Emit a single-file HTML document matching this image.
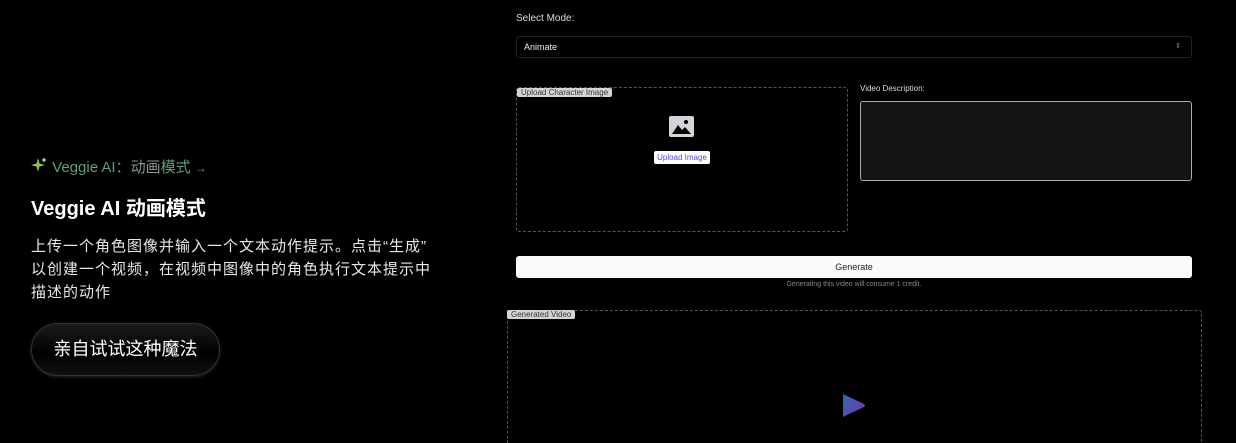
<!DOCTYPE html>
<html><head><meta charset="utf-8"><style>
*{box-sizing:border-box;margin:0;padding:0}
html,body{width:1236px;height:443px;overflow:hidden}
body{background:#000;position:relative;font-family:"Liberation Sans","Noto Sans CJK SC",sans-serif;color:#fff}
.a{position:absolute}
.tag{position:absolute;background:#d4d4d8;color:#333;font-size:8px;line-height:9px;padding:0 4px;border-radius:2px}
</style></head><body>
<div class="a" style="left:31px;top:157px;font-size:15px;line-height:20px;color:#5e9f74;white-space:nowrap">
<svg width="17" height="17" viewBox="0 0 17 17" style="vertical-align:-2px"><path d="M7 1 L8.5 6.5 L14 8 L8.5 9.5 L7 15 L5.5 9.5 L0 8 L5.5 6.5Z" fill="#8bc34a"/><path d="M13 0 L13.8 2.2 L16 3 L13.8 3.8 L13 6 L12.2 3.8 L10 3 L12.2 2.2Z" fill="#c5e1a5"/></svg>
 Veggie AI：<span style="color:#8a9a8e">动画</span>模式 <span style="color:#888;font-size:12px">→</span></div>
<div class="a" style="left:31px;top:196px;font-size:20px;font-weight:bold;line-height:26px">Veggie AI 动画模式</div>
<div class="a" style="left:31px;top:235px;font-size:15px;line-height:23px;color:#e8e8e8;white-space:nowrap;letter-spacing:1px">上传一个角色图像并输入一个文本动作提示。点击“生成”<br>以创建一个视频，在视频中图像中的角色执行文本提示中<br>描述的动作</div>
<div class="a" style="left:31px;top:323px;width:189px;height:53px;border-radius:27px;background:linear-gradient(180deg,#1a1a1a,#000 60%,#111);border:1px solid #333;box-shadow:0 1px 3px rgba(255,255,255,.15);font-size:18px;line-height:51px;text-align:center">亲自试试这种魔法</div>

<div class="a" style="left:516px;top:13px;font-size:10px;color:#ddd">Select Mode:</div>
<div class="a" style="left:516px;top:36px;width:676px;height:22px;border:1px solid #222;border-radius:3px;font-size:9px;line-height:20px;padding-left:7px;color:#eee">Animate<span style="position:absolute;right:10px;color:#888;font-size:7px">⇕</span></div>

<div class="a" style="left:516px;top:87px;width:332px;height:145px;border:1px dashed #555;border-radius:3px"></div>
<div class="tag" style="left:517px;top:88px">Upload Character Image</div>
<svg class="a" style="left:669px;top:116px" width="25" height="21" viewBox="0 0 25 21"><rect x="0" y="0" width="25" height="21" rx="2" fill="#d4d4d8"/><circle cx="17" cy="6" r="2" fill="#000"/><path d="M3 18 L9 9 L13 14 L16 11 L22 18Z" fill="#000"/></svg>
<div class="a" style="left:654px;top:151px;width:56px;height:13px;background:#fff;border-radius:2px;color:#4f46e5;font-size:8px;line-height:13px;text-align:center">Upload Image</div>

<div class="a" style="left:860px;top:84px;font-size:8px;color:#ddd">Video Description:</div>
<div class="a" style="left:860px;top:101px;width:332px;height:80px;background:#141414;border:1px solid #aaa;border-radius:3px"></div>

<div class="a" style="left:516px;top:256px;width:676px;height:22px;background:#fafafa;border-radius:3px;color:#222;font-size:9px;line-height:22px;text-align:center">Generate</div>
<div class="a" style="left:516px;top:281px;width:676px;text-align:center;font-size:7px;color:#888">Generating this video will consume 1 credit.</div>

<div class="a" style="left:507px;top:310px;width:695px;height:140px;border:1px dashed #555;border-radius:3px"></div>
<div class="tag" style="left:507px;top:310px">Generated Video</div>
<svg class="a" style="left:843px;top:393px" width="23" height="25" viewBox="0 0 23 25"><defs><linearGradient id="g" x1="0" y1="0" x2="1" y2="1"><stop offset="0" stop-color="#2a6fa8"/><stop offset="1" stop-color="#7b2fb0"/></linearGradient></defs><path d="M2 2 Q0 0 0 3 V22 Q0 25 2 23 L21 14 Q23 12.5 21 11Z" fill="url(#g)"/></svg>
</body></html>
